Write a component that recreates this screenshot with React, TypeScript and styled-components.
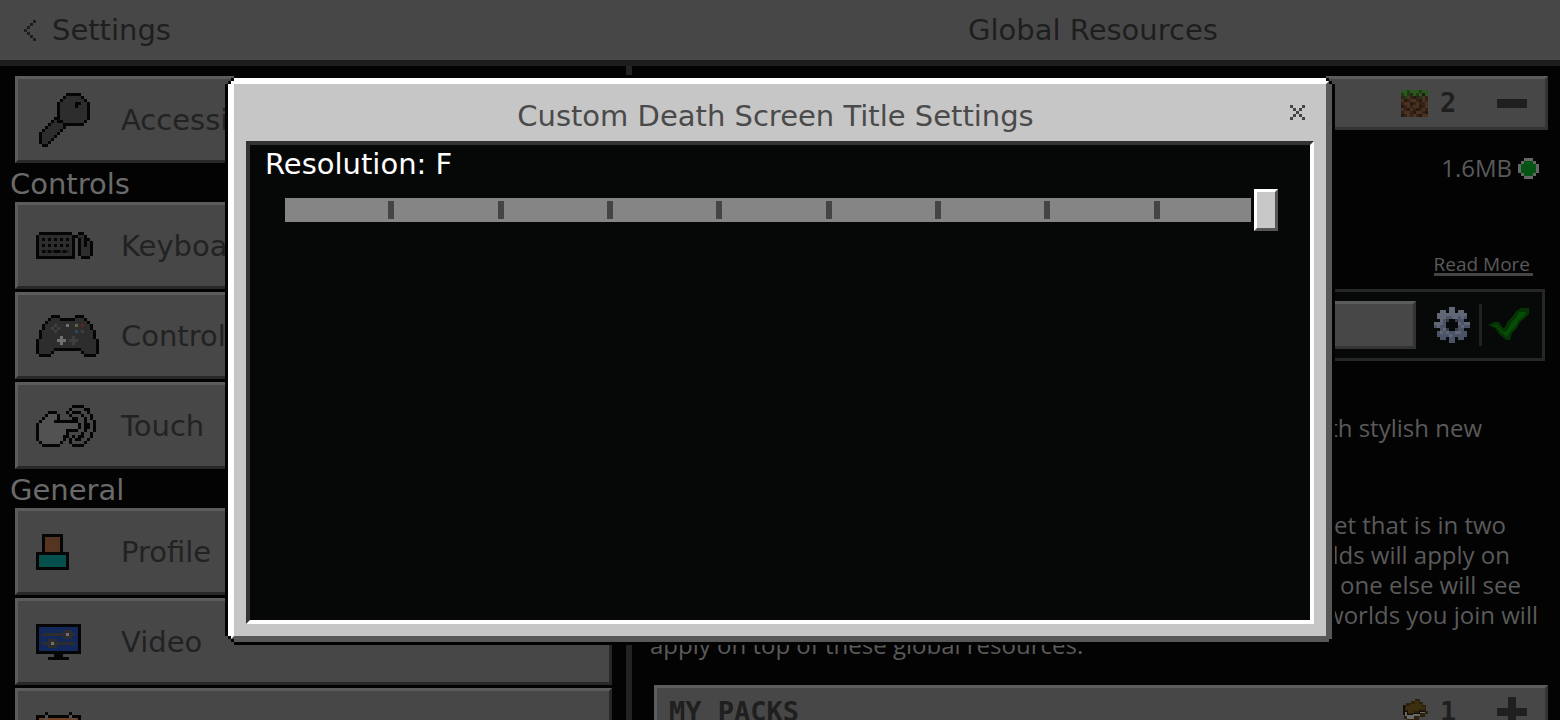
import React, { useState } from "react";
import styled, { createGlobalStyle } from "styled-components";

const GlobalStyle = createGlobalStyle`
  * { box-sizing: border-box; }
  html, body { margin: 0; background: #030303; }
  button, input { font: inherit; color: inherit; margin: 0; padding: 0; border: 0; background: none; }
`;

const PIXEL_FONT = `"DejaVu Sans", sans-serif`;
const BODY_FONT = `"Open Sans", "Noto Sans", sans-serif`;

/* ---------- pixel art ---------- */

const palette: Record<string, string> = {
  K: "#050505", g: "#2d2d2d", d: "#1c1c1c", w: "#707070", h: "#525252", e: "#3f3f3f",
  y: "#6b6335", r: "#5c2424", b: "#1f4a66", t: "#05504c", s: "#553522", n: "#13285a",
  o: "#6f3f1e", G: "#2c5520", D: "#1d3c14", B: "#4a3120", C: "#352216", E: "#251a13",
  m: "#626775", l: "#4b5369", k: "#373c48", X: "#444444", S: "#1e1e1e", P: "#666666", Q: "#065414",
};

interface ArtProps { rows: string[] }

const CELL = 3;

function PixelArt({ rows }: ArtProps) {
  const width = Math.max(...rows.map((r) => r.length));
  return (
    <svg width={width * CELL} height={rows.length * CELL} viewBox={`0 0 ${width} ${rows.length}`}
      shapeRendering="crispEdges" aria-hidden="true">
      {rows.flatMap((row, y) =>
        [...row].map((c, x) =>
          palette[c] ? <rect key={`${x}-${y}`} x={x} y={y} width={1} height={1} fill={palette[c]} /> : null
        )
      )}
    </svg>
  );
}

const keyArt = [
  "..........KKKKK...",
  ".........KgggggK..",
  "........KgggggggK.",
  ".......KgggggKKggK",
  ".......KgggggKgggK",
  ".......KgggggggggK",
  ".......KgggggggggK",
  ".......KgggggggggK",
  "......KKgggggggggK",
  ".....KgKKgggggggK.",
  "....KggggKKKKKKK..",
  "...KgggggK........",
  "..KgggggK.........",
  ".KgggggK..........",
  ".KggggK...........",
  ".KgggK............",
  ".KggK.............",
  "..KK..............",
];

const keyboardArt = [
  ".KKKKKKKKKKK..KK...",
  "KgggggggggggKKggK..",
  "KgKgKgKgKgKgK.KgKK.",
  "KgggggggggggK.KgKgK",
  "KgKgKgKgKgKgK.KgKgK",
  "KgggggggggggK.KgggK",
  "KgKdKdKKdKdgK.KgggK",
  "KgggggggggggK.KgggK",
  "KKKKKKKKKKKKK..KKK.",
];

const controllerArt = [
  ".....KKK.....KKK.....",
  "....KgggKKKKKgggK....",
  "...KgggggggggggggK...",
  "..KgggegggwggygrggK..",
  "..KggegeggggggggggK..",
  ".KggggeggggggbgegggK.",
  ".KgggggggggggggggggK.",
  ".KggggggwgggeggggggK.",
  "KggggggwwwgeeeggggggK",
  "KgggggggwgggegggggggK",
  "KgggggggggggggggggggK",
  "KgggggKKKKKKKKKgggggK",
  "KggggK.........KggggK",
  ".KKKK...........KKKK.",
];

const touchArt = [
  "............KKKK....",
  "...........K....KK..",
  "....KKK...K.KKK..K..",
  "...KhhhK...K...K..K.",
  "..KhhhhK....KK..K.K.",
  ".KhhhhKKKKKKKK..K..K",
  "KhhhhhhhhhhhhhK.KK.K",
  "KhhhhhhhhhhhhhK.KK.K",
  "KhhhhhhhhhKKKK..K..K",
  "KhhhhhhhhhK....K..K.",
  "KhhhhhhhhKK.K.KK..K.",
  "KhhhhhhhhK.K.KK..K..",
  ".KhhhhhhK..K....K...",
  "..KKKKKK....KKKK....",
];

const profileArt = [
  "..KKKKKKK..", "..KsssssK..", "..KsssssK..", "..KsssssK..", "..KsssssK..", "..KsssssK..",
  "KKKKKKKKKKK", "KtttttttttK", "KtttttttttK", "KtttttttttK", "KtttttttttK", "KKKKKKKKKKK",
];

const videoArt = [
  "KKKKKKKKKKKKKKK",
  "KnnnnnnnnnnnnnK",
  "KnnnnnnnngggnnK",
  "KnggggggggwggnK".replace(" ", ""),
  "KnnnnnnnngggnnK",
  "KnnngggnnnnnnnK",
  "KngggwgggggggnK",
  "KnnngggnnnnnnnK",
  "KnnnnnnnnnnnnnK",
  "KKKKKKKKKKKKKKK",
  "......KKK......",
  "....KKKKKKK....",
];
videoArt[3] = "KnggggggggwggnK";

const calendarArt = [
  "...K.......K...",
  "KKKhKKKKKKKhKKK",
  "KoohoooooooohoK",
  "KoooooooooooooK",
  ...Array.from({ length: 8 }, () => "KwwwwwwwwwwwwwK"),
  "KKKKKKKKKKKKKKK",
];

const grassArt = [
  "GGDGGGDGG", "DGDCGDGEG", "CDBCECDBC", "BECBBCEBC", "CBBECBCCB", "ECBCBBECB", "BCEBCECBC", "CBBCEBBCE", "ECBCBCEBB",
];

const gearArt = [
  ".....mm.....", "..mm.mm.mm..", ".mmmmmmmmmm.", ".mmmllmmlml.", "..mlk..kll..", "mmml....mlmm",
  "lmll....lmll", "..lmk..kll..", ".lmlmllmmll.", ".llllmlllll.", "..ll.ll.ll..", ".....ll.....",
];

const ownedArt = ["..PPP..", ".PQQQP.", "PQQQQQP", "PQQQQQP", "PQQQQQP", ".PQQQP.", "..PPP.."];

const closeArt = ["X...X", ".X.X.", "..X..", ".X.X.", "X...X"];
const backArt = ["...S", "..S.", ".S..", "S...", ".S..", "..S.", "...S"];

/* ---------- screen ---------- */

const Screen = styled.div`
  height: 100vh;
  overflow: hidden;
  display: flex;
  flex-direction: column;
  background: #030303;
  font-family: ${PIXEL_FONT};
  font-size: 29px;
  line-height: 30px;
`;

const TopBar = styled.header`
  flex: none;
  display: grid;
  grid-template-columns: 626px 1fr;
  align-items: center;
  height: 66px;
  background: #474747;
  border-bottom: 6px solid #1d1d1d;
  color: #1e1e1e;
`;

const BackButton = styled.button`
  display: flex;
  align-items: center;
  justify-self: start;
  gap: 16px;
  padding-left: 24px;
`;

const PageTitle = styled.h1`
  margin: 0;
  font: inherit;
  text-align: center;
`;

const Columns = styled.div`
  flex: 1;
  min-height: 0;
  display: flex;
`;

const Sidebar = styled.nav`
  flex: 0 0 626px;
  padding: 10px 14px 0 10px;
  overflow: hidden;
`;

const SectionLabel = styled.h2`
  margin: 0;
  padding-top: 4px;
  font: inherit;
  line-height: 35px;
  color: #6a6a6a;
`;

const NavList = styled.div`
  display: flex;
  flex-direction: column;
  gap: 3px;
  padding-left: 5px;
`;

const NavButton = styled.button`
  display: flex;
  align-items: center;
  height: 87px;
  padding-left: 18px;
  background: #474747;
  border: 3px solid;
  border-color: #5c5c5c #282828 #282828 #5c5c5c;
  color: #222222;
`;

const NavIcon = styled.span`
  display: flex;
  flex: 0 0 85px;
`;

const Divider = styled.div`
  flex: 0 0 6px;
  background: #232324;
`;

const Main = styled.main`
  flex: 1;
  min-width: 0;
  display: flex;
  flex-direction: column;
  padding: 10px 12px 0 22px;
  font-family: ${BODY_FONT};
  font-size: 24px;
  color: #5a5a5a;
  > * { flex-shrink: 0; }
`;

const PackBar = styled.button`
  display: flex;
  align-items: center;
  height: 54px;
  padding: 0 18px 0 12px;
  background: #474747;
  border: 3px solid;
  border-color: #5c5c5c #343434 #343434 #5c5c5c;
  font-family: "DejaVu Sans Mono", monospace;
  font-weight: bold;
  font-size: 27px;
  color: #1f1f1f;
`;

const PackName = styled.span`
  flex: 1;
  text-align: left;
`;

const PackCount = styled.span`
  width: 69px;
  padding-left: 12px;
  text-align: left;
`;

const SizeRow = styled.div`
  display: flex;
  align-items: center;
  justify-content: flex-end;
  gap: 6px;
  padding: 23px 9px 0 0;
`;

const ReadMore = styled.a`
  align-self: flex-end;
  margin: 72px 15px 0 0;
  padding-right: 3px;
  font-size: 19px;
  line-height: 18px;
  color: #5a5a5a;
  text-decoration: none;
  border-bottom: 3px solid #454545;
`;

const ActiveRow = styled.div`
  display: flex;
  align-items: center;
  gap: 18px;
  height: 72px;
  margin: 13px 3px 0 3px;
  padding: 0 9px;
  border: 3px solid #252727;
  background: #070808;
`;

const ActiveButton = styled.button`
  flex: 1;
  height: 48px;
  background: #474747;
  border: 3px solid;
  border-color: #5c5c5c #343434 #343434 #5c5c5c;
`;

const IconButton = styled.button`
  display: flex;
`;

const CheckGroup = styled.div`
  display: flex;
  align-items: center;
  height: 42px;
  margin-left: -9px;
  border-left: 3px solid #1f2222;
  padding-left: 6px;
`;

const Paragraph = styled.div<{ $top: number }>`
  padding-top: ${(p) => p.$top}px;
  line-height: 30px;
`;

const Line = styled.div<{ $inset?: number }>`
  text-align: ${(p) => (p.$inset === undefined ? "left" : "right")};
  padding-right: ${(p) => p.$inset ?? 0}px;
  margin-left: -4px;
  white-space: nowrap;
`;

const PacksSection = styled.section`
  display: flex;
  flex-direction: column;
  padding-top: 25px;
`;

/* ---------- dialog ---------- */

const Overlay = styled.div`
  position: fixed;
  inset: 0;
  display: flex;
  padding: 75px 225px;
  font-family: ${PIXEL_FONT};
  font-size: 29px;
  line-height: 30px;
`;

const DialogOutline = styled.div`
  flex: 1;
  display: flex;
  padding: 3px;
  background: #030303;
  clip-path: polygon(
    0 9px, 3px 9px, 3px 6px, 6px 6px, 6px 3px, 9px 3px, 9px 0,
    calc(100% - 9px) 0, calc(100% - 9px) 3px, calc(100% - 6px) 3px, calc(100% - 6px) 6px, calc(100% - 3px) 6px, calc(100% - 3px) 9px, 100% 9px,
    100% 100%, 9px 100%, 9px calc(100% - 3px), 6px calc(100% - 3px), 6px calc(100% - 6px), 3px calc(100% - 6px), 3px calc(100% - 9px), 0 calc(100% - 9px)
  );
`;

const Dialog = styled.section`
  flex: 1;
  display: flex;
  flex-direction: column;
  padding: 0 12px 12px;
  background: #c6c6c6;
  border: 6px solid;
  border-color: #ffffff #585858 #585858 #ffffff;
  clip-path: polygon(
    0 6px, 3px 6px, 3px 3px, 6px 3px, 6px 0,
    calc(100% - 6px) 0, calc(100% - 6px) 3px, calc(100% - 3px) 3px, calc(100% - 3px) 6px, 100% 6px,
    100% calc(100% - 3px), calc(100% - 3px) calc(100% - 3px), calc(100% - 3px) 100%,
    6px 100%, 6px calc(100% - 3px), 3px calc(100% - 3px), 3px calc(100% - 6px), 0 calc(100% - 6px)
  );
`;

const DialogHeader = styled.header`
  flex: none;
  display: grid;
  grid-template-columns: 1fr auto 1fr;
  align-items: center;
  height: 57px;
  padding-right: 9px;
  color: #4a4a4a;
`;

const DialogTitle = styled.h2`
  grid-column: 2;
  margin: 0;
  padding-top: 6px;
  font: inherit;
`;

const CloseButton = styled.button`
  display: flex;
  justify-self: end;
`;

const DialogBody = styled.div`
  flex: 1;
  background: #060707;
  border: 4px solid;
  border-color: #323332 #ffffff #ffffff #323332;
`;

const SliderLabel = styled.label`
  display: block;
  padding-left: 15px;
  line-height: 38px;
  color: #ffffff;
`;

const Slider = styled.div`
  display: grid;
  align-items: center;
  margin: 6px 32px 0 20px;
  > * { grid-area: 1 / 1; }
`;

const Track = styled.div`
  height: 24px;
  margin: 0 27px 0 15px;
  background: #858585;
`;

const Ticks = styled.div`
  display: grid;
  grid-template-columns: repeat(9, 1fr);
  height: 18px;
  margin: 0 12px;
`;

const Tick = styled.span`
  justify-self: end;
  width: 6px;
  margin-right: -3px;
  background: #434443;
  &:last-child { visibility: hidden; }
`;

const Range = styled.input`
  appearance: none;
  width: 100%;
  height: 42px;
  outline: none;
  &::-webkit-slider-thumb {
    appearance: none;
    width: 24px;
    height: 42px;
    background: #c8c8c8;
    border: 3px solid;
    border-color: #ffffff #555655 #555655 #ffffff;
    box-shadow: 0 0 0 3px #060707;
  }
`;

const inputs = [
  { name: "Keyboard & Mouse", art: keyboardArt },
  { name: "Controller", art: controllerArt },
  { name: "Touch", art: touchArt },
];

const general = [
  { name: "Profile", art: profileArt },
  { name: "Video", art: videoArt },
  { name: "", art: calendarArt },
];

function NavItem({ name, art }: { name: string; art: string[] }) {
  return (
    <NavButton type="button">
      <NavIcon><PixelArt rows={art} /></NavIcon>
      {name}
    </NavButton>
  );
}

function CheckMark() {
  return (
    <svg width="45" height="36" viewBox="0 0 45 36" aria-hidden="true">
      <path d="M0 18 L6 15 H11 L15 21 L17 20 L20 14 L25 9 L28 4 L33 1 H41 V7 L37 11 L32 15 L29 21 L24 26 L22 33 H18 L11 27 L7 21 Z" fill="#053303" />
      <path d="M4 18 L9 18 L15 25 L19 24 L23 16 L28 11 L31 5 H38 L36 9 L31 13 L27 20 L22 25 L19 30 L14 26 L9 20 Z" fill="#064e05" />
    </svg>
  );
}

function Book() {
  return (
    <svg width="28" height="27" viewBox="0 0 28 27" shapeRendering="crispEdges" aria-hidden="true">
      <path d="M3 6 H6 V4 H11 V2 H15 V0 H20 V3 H23 V6 H26 V12 H28 V15 H25 V18 H19 V21 H12 V24 H7 V20 H4 V16 H3 Z" fill="#2c210c" />
      <path d="M6 7 H10 V5 H15 V2 H19 V5 H22 V8 H25 V10 H19 V12 H13 V14 H8 V11 H6 Z" fill="#3d2e10" />
      <path d="M3 6 H5 V12 H8 V15 H13 V14 H19 V12 H25 V14 H20 V17 H14 V20 H7 V16 H3 Z" fill="#120d07" />
      <path d="M5 13 H7 V16 H13 V15 H20 V13 H25 V14 H20 V17 H14 V20 H7 V17 H5 Z" fill="#696969" />
    </svg>
  );
}

export default function App() {
  const [value, setValue] = useState(9);
  return (
    <>
      <GlobalStyle />
      <Screen>
        <TopBar>
          <BackButton type="button"><PixelArt rows={backArt} />Settings</BackButton>
          <PageTitle>Global Resources</PageTitle>
        </TopBar>
        <Columns>
          <Sidebar>
            <NavList><NavItem name="Accessibility" art={keyArt} /></NavList>
            <SectionLabel>Controls</SectionLabel>
            <NavList>{inputs.map((i) => <NavItem key={i.name} {...i} />)}</NavList>
            <SectionLabel>General</SectionLabel>
            <NavList>{general.map((i) => <NavItem key={i.name} {...i} />)}</NavList>
          </Sidebar>
          <Divider />
          <Main>
            <PackBar type="button">
              <PackName />
              <PixelArt rows={grassArt} />
              <PackCount>2</PackCount>
              <svg width="30" height="30" aria-hidden="true"><path d="M0 11h30v9H0z" fill="#1f1f1f" /></svg>
            </PackBar>
            <SizeRow>1.6MB<PixelArt rows={ownedArt} /></SizeRow>
            <ReadMore href="#">Read More</ReadMore>
            <ActiveRow>
              <ActiveButton type="button" aria-label="Select pack" />
              <IconButton type="button" aria-label="Pack settings"><PixelArt rows={gearArt} /></IconButton>
              <CheckGroup><CheckMark /></CheckGroup>
            </ActiveRow>
            <Paragraph $top={52}>
              <Line $inset={66}>with stylish new</Line>
            </Paragraph>
            <Paragraph $top={67}>
              <Line $inset={42}>set that is in two</Line>
              <Line $inset={38}>worlds will apply on</Line>
              <Line $inset={27}>No one else will see</Line>
              <Line $inset={10}>worlds you join will</Line>
              <Line>apply on top of these global resources.</Line>
            </Paragraph>
            <PacksSection>
              <PackBar type="button">
                <PackName>MY PACKS</PackName>
                <Book />
                <PackCount>1</PackCount>
                <svg width="30" height="30" aria-hidden="true"><path d="M11 0h8v11h11v8H19v11h-8V19H0v-8h11z" fill="#1f1f1f" /></svg>
              </PackBar>
            </PacksSection>
          </Main>
        </Columns>
      </Screen>
      <Overlay>
        <DialogOutline>
          <Dialog role="dialog" aria-modal="true" aria-labelledby="dialog-title">
            <DialogHeader>
              <DialogTitle id="dialog-title">Custom Death Screen Title Settings</DialogTitle>
              <CloseButton type="button" aria-label="Close"><PixelArt rows={closeArt} /></CloseButton>
            </DialogHeader>
            <DialogBody>
              <SliderLabel htmlFor="resolution">Resolution: F</SliderLabel>
              <Slider>
                <Track />
                <Ticks>{Array.from({ length: 9 }, (_, i) => <Tick key={i} />)}</Ticks>
                <Range id="resolution" type="range" min={0} max={9} value={value}
                  onChange={(e: React.ChangeEvent<HTMLInputElement>) => setValue(Number(e.target.value))} />
              </Slider>
            </DialogBody>
          </Dialog>
        </DialogOutline>
      </Overlay>
    </>
  );
}
